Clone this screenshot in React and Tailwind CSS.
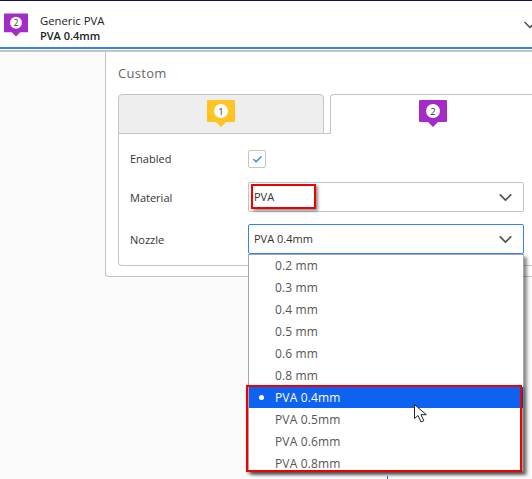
import React from "react";
import { ChevronDown, Check } from "lucide-react";

const Badge = ({ n, color, className = "" }) => (
  <svg width="28" height="27" viewBox="0 0 28 27" className={className}>
    <path d="M1 0h26a1 1 0 0 1 1 1v20a1 1 0 0 1-1 1h-8l-5 5-5-5H1a1 1 0 0 1-1-1V1a1 1 0 0 1 1-1z" fill={color} />
    <circle cx="14" cy="11" r="7" fill="#fff" />
    <text x="14" y="14.5" textAnchor="middle" fontSize="9.5" fill="#333" fontFamily="Open Sans, sans-serif">
      {n}
    </text>
  </svg>
);

const options = ["0.2 mm", "0.3 mm", "0.4 mm", "0.5 mm", "0.6 mm", "0.8 mm", "PVA 0.4mm", "PVA 0.5mm", "PVA 0.6mm", "PVA 0.8mm"];

const App = () => {
  return (
    <div className="relative w-[532px] h-[479px] overflow-hidden bg-[#fafafa] font-['Open_Sans',sans-serif] text-[#444]">
      {/* Top bar */}
      <div className="h-[52px] bg-white border-t border-[#14104a]">
        <div className="h-[46px] flex items-center pl-1 relative">
          <Badge n="2" color="#a42bc8" className="w-6 h-6 mt-[1px]" />
          <div className="ml-3 pt-2 leading-[15px] text-[11px] text-[#222]">
            <div className="text-[11.3px]">Generic PVA</div>
            <div className="font-semibold">PVA 0.4mm</div>
          </div>
          <ChevronDown className="absolute left-[520px] top-[14px] w-5 h-5 text-[#555]" />
        </div>
        <div className="h-[5px] border-t-2 border-b-2 border-t-[#3282ff] border-b-[#c4c4c4] bg-white" />
      </div>

      {/* Panel */}
      <div className="ml-[105px] h-[225px] bg-white border-l border-b border-[#c4c4c4] rounded-bl pl-3 pt-3">
        <div className="text-[13px] leading-[18px] text-[#666] tracking-[0.3px]">Custom</div>

        {/* Tabs */}
        <div className="mt-[12px] w-[427px] flex items-end">
          <div className="w-[206px] h-[40px] bg-[#eeeeee] border border-[#c4c4c4] rounded-t flex justify-center pt-[5px]">
            <Badge n="1" color="#fdc423" />
          </div>
          <div className="w-[6px] h-px bg-[#c4c4c4]" />
          <div className="flex-1 h-[40px] bg-white border border-b-0 border-[#c4c4c4] rounded-t pl-[88px] pt-[5px]">
            <Badge n="2" color="#a42bc8" />
          </div>
        </div>

        {/* Extruder form */}
        <div className="w-[427px] h-[132px] border border-t-0 border-[#c4c4c4] rounded-b flex flex-col pl-[11px] pr-[20px] pt-[16px] text-[11px] text-[#333]">
          <div className="flex items-center h-[18px]">
            <div className="w-[118px]">Enabled</div>
            <div className="w-[18px] h-[18px] border border-[#c4c4c4] rounded-[2px] flex items-center justify-center">
              <Check className="w-[11px] h-[11px] text-[#3282ff]" strokeWidth={3} />
            </div>
          </div>
          <div className="flex items-center h-[30px] mt-[14px]">
            <div className="w-[118px] pt-[2px]">Material</div>
            <div className="flex-1 h-full border border-[#c4c4c4] rounded-[2px] flex items-center justify-between pl-[5px] pr-[7px]">
              <span>PVA</span>
              <ChevronDown className="w-[21px] h-[21px] text-[#555]" />
            </div>
          </div>
          <div className="flex items-center h-[30px] mt-[12px]">
            <div className="w-[118px] pt-[2px]">Nozzle</div>
            <div className="flex-1 h-full border border-[#3282ff] rounded-[2px] flex items-center justify-between pl-[5px] pr-[7px]">
              <span>PVA 0.4mm</span>
              <ChevronDown className="w-[21px] h-[21px] text-[#555]" />
            </div>
          </div>
        </div>
      </div>

      {/* Dropdown menu */}
      <div className="absolute left-[248px] top-[254px] w-[276px] h-[218px] bg-white border border-[#a8a8a8] shadow-[3px_3px_3px_rgba(0,0,0,0.45)] overflow-hidden text-[12px] text-[#555] tracking-[0.15px]">
        {options.map((o) => (
          <div
            key={o}
            className={
              o === "PVA 0.4mm"
                ? "h-[21px] mb-px flex items-center pl-[26px] relative bg-[#0d62f2] text-white"
                : "h-[22px] flex items-center pl-[26px]"
            }
          >
            {o === "PVA 0.4mm" && <span className="absolute left-[10px] top-[8px] w-[5px] h-[5px] rounded-full bg-white" />}
            {o}
          </div>
        ))}
      </div>

      {/* Red annotations */}
      <div className="absolute left-[251px] top-[184px] w-[65px] h-[25px] border-2 border-[#f00000] shadow-[2px_2px_3px_rgba(0,0,0,0.45)]" />
      <div className="absolute left-[246px] top-[385px] w-[276px] h-[87px] border-2 border-[#f00000] shadow-[2px_2px_3px_rgba(0,0,0,0.45)]" />

      {/* Stray line below the menu */}
      <div className="absolute left-[387px] top-[476px] w-px h-[3px] bg-[#3a5fc8]" />

      {/* Cursor */}
      <svg className="absolute left-[414px] top-[404px]" width="14" height="19" viewBox="0 0 14 19">
        <path d="M0.5 0.5v14l3.5-3 3 6.5 2.8-1.3-2.8-6h5.3z" fill="#fff" stroke="#222" strokeWidth="1" />
      </svg>
    </div>
  );
};

export default App;
